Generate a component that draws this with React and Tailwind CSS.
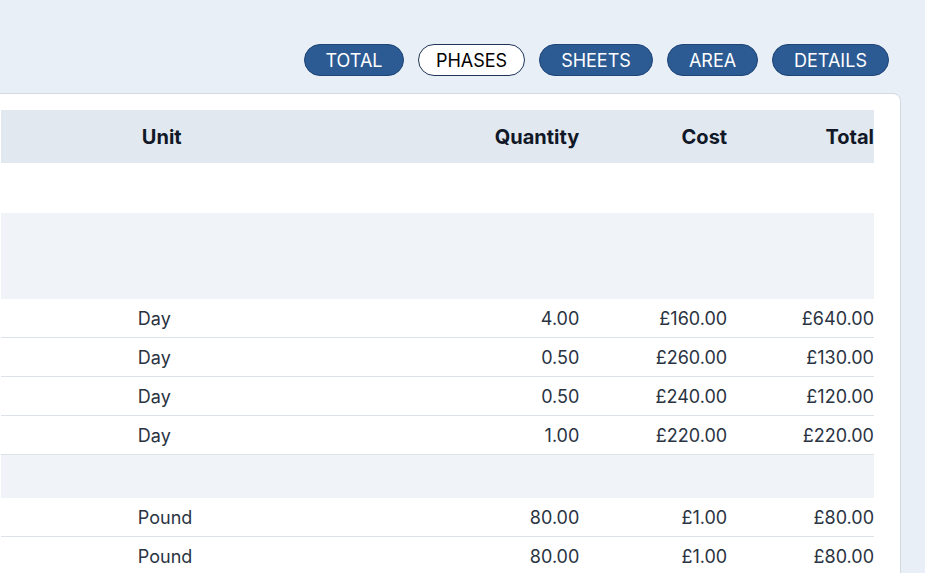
export default function App() {
  const btns = [["TOTAL", 100], ["PHASES", 107], ["SHEETS", 114], ["AREA", 91], ["DETAILS", 117]];
  const Row = ({ u, q, c, t }) => (
    <div className="flex h-[39px] items-center border-b border-[#dde2e8] bg-white text-[18px] text-[#2a3342]">
      <div className="w-[137px]" />
      <div className="w-[200px]">{u}</div>
      <div className="w-[242px] text-right">{q}</div>
      <div className="w-[148px] text-right">{c}</div>
      <div className="w-[147px] text-right">{t}</div>
    </div>
  );
  return (
    <div className="h-[573px] w-[925px] overflow-hidden bg-[#e9eff7]" style={{ fontFamily: "Inter, 'Noto Sans', sans-serif" }}>
      <div className="flex h-[93px] items-start justify-end gap-[14px] pr-[36px] pt-[44px]">
        {btns.map(([b, w]) => (
          <div key={b} style={{ width: w }} className={`flex h-[32px] items-center justify-center rounded-full border text-[18px] ${b === "PHASES" ? "border-[#1d3557] bg-white text-black" : "border-[#1e4677] bg-[#2c5a93] text-white"}`}>{b}</div>
        ))}
      </div>
      <div className="ml-[-10px] h-[500px] w-[911px] rounded-tr-lg border border-[#d3d9e1] bg-white pt-[16px] pr-[26px]">
        <div className="ml-[10px]">
          <div className="flex h-[53px] items-center bg-[#e2e8f0] text-[20px] font-bold text-[#111827]">
            <div className="w-[141px]" />
            <div className="w-[196px]">Unit</div>
            <div className="w-[242px] text-right">Quantity</div>
            <div className="w-[148px] text-right">Cost</div>
            <div className="w-[147px] text-right">Total</div>
          </div>
          <div className="h-[50px] bg-white" />
          <div className="h-[86px] bg-[#f0f4f9]" />
          <Row u="Day" q="4.00" c="£160.00" t="£640.00" />
          <Row u="Day" q="0.50" c="£260.00" t="£130.00" />
          <Row u="Day" q="0.50" c="£240.00" t="£120.00" />
          <Row u="Day" q="1.00" c="£220.00" t="£220.00" />
          <div className="h-[43px] bg-[#f0f4f9]" />
          <Row u="Pound" q="80.00" c="£1.00" t="£80.00" />
          <Row u="Pound" q="80.00" c="£1.00" t="£80.00" />
        </div>
      </div>
    </div>
  );
}
